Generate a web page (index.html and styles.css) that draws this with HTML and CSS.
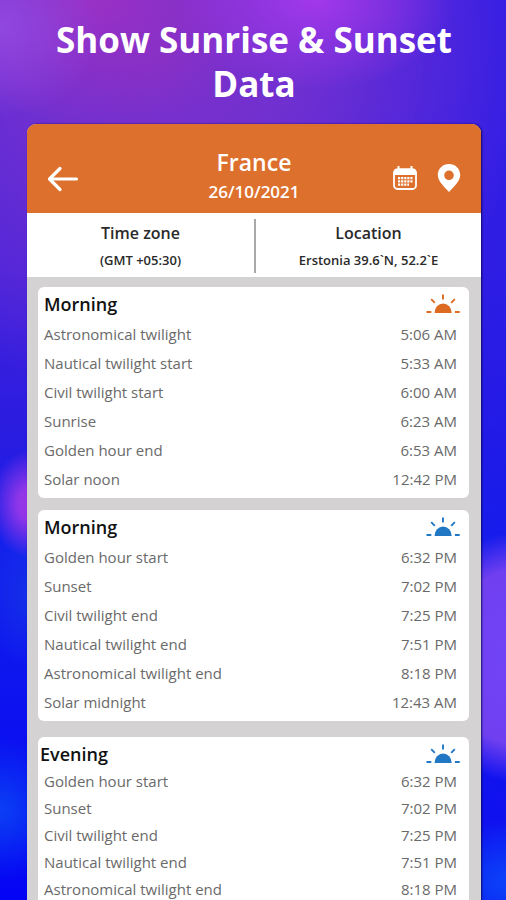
FILE: index.html
```html
<!DOCTYPE html>
<html lang="en">
<head>
<meta charset="utf-8">
<meta name="viewport" content="width=device-width, initial-scale=1">
<title>Sunrise &amp; Sunset</title>
<link rel="stylesheet" href="styles.css">
</head>
<body>
<svg class="defs" aria-hidden="true">
  <symbol id="sun" viewBox="0 0 34 20">
    <path d="M8.500 19a8.600 9.500 0 0 1 17.200 0z" fill="currentColor"/>
    <path d="M0.500 18h4.800M28.900 18h4.800M17 0.500v5M5.200 5.200l3.600 3.600M28.800 5.200l-3.600 3.600" stroke="currentColor" stroke-width="1.900" fill="none"/>
  </symbol>
</svg>
<main class="promo">
  <h1 class="headline">Show Sunrise &amp; Sunset Data</h1>
  <div class="phone">
    <header class="bar">
      <button class="icon-button" type="button" aria-label="Back">
        <svg width="32" height="26" viewBox="0 0 32 26"><path d="M13 2.500L2.500 13L13 23.500M3 13h26.500" fill="none" stroke="currentColor" stroke-width="3.200" stroke-linecap="round" stroke-linejoin="round"/></svg>
      </button>
      <div class="place">
        <h2>France</h2>
        <p>26/10/2021</p>
      </div>
      <div class="actions">
        <button class="icon-button" type="button" aria-label="Pick date">
          <svg width="24" height="24" viewBox="0 0 24 24"><rect x="1" y="3.500" width="22" height="19.500" rx="3.500" fill="none" stroke="currentColor" stroke-width="1.800"/><path d="M0.500 9V6.500Q0.500 2.500 4.500 2.500h15Q23.500 2.500 23.500 6.500V9zM4.500 0h2v4h-2zM17.500 0h2v4h-2z" fill="currentColor"/><path d="M5 12.200h14.500M5 15.400h14.500M5 18.600h11" stroke="currentColor" stroke-width="2.200" stroke-dasharray="2.200 0.900" fill="none"/></svg>
        </button>
        <button class="icon-button" type="button" aria-label="Pick location">
          <svg width="24" height="28" viewBox="0 0 24 28"><path fill="currentColor" fill-rule="evenodd" d="M12 0C5.600 0 0.800 4.800 0.800 11c0 6 5.700 11 11.200 17 5.500-6 11.200-11 11.200-17C23.200 4.800 18.400 0 12 0zm0 6.500a4.800 4.800 0 1 1 0 9.600 4.800 4.800 0 0 1 0-9.600z"/></svg>
        </button>
      </div>
    </header>
    <section class="info">
      <div class="info-item"><h3>Time zone</h3><p>(GMT +05:30)</p></div>
      <div class="info-item"><h3>Location</h3><p>Erstonia 39.6`N, 52.2`E</p></div>
    </section>
    <div class="cards">
      <section class="card">
        <div class="card-head"><h3>Morning</h3><svg class="sun sun-orange" aria-hidden="true"><use href="#sun"/></svg></div>
        <table>
          <tr><th scope="row">Astronomical twilight</th><td>5:06 AM</td></tr>
          <tr><th scope="row">Nautical twilight start</th><td>5:33 AM</td></tr>
          <tr><th scope="row">Civil twilight start</th><td>6:00 AM</td></tr>
          <tr><th scope="row">Sunrise</th><td>6:23 AM</td></tr>
          <tr><th scope="row">Golden hour end</th><td>6:53 AM</td></tr>
          <tr><th scope="row">Solar noon</th><td>12:42 PM</td></tr>
        </table>
      </section>
      <section class="card">
        <div class="card-head"><h3>Morning</h3><svg class="sun sun-blue" aria-hidden="true"><use href="#sun"/></svg></div>
        <table>
          <tr><th scope="row">Golden hour start</th><td>6:32 PM</td></tr>
          <tr><th scope="row">Sunset</th><td>7:02 PM</td></tr>
          <tr><th scope="row">Civil twilight end</th><td>7:25 PM</td></tr>
          <tr><th scope="row">Nautical twilight end</th><td>7:51 PM</td></tr>
          <tr><th scope="row">Astronomical twilight end</th><td>8:18 PM</td></tr>
          <tr><th scope="row">Solar midnight</th><td>12:43 AM</td></tr>
        </table>
      </section>
      <section class="card card-compact">
        <div class="card-head"><h3>Evening</h3><svg class="sun sun-blue" aria-hidden="true"><use href="#sun"/></svg></div>
        <table>
          <tr><th scope="row">Golden hour start</th><td>6:32 PM</td></tr>
          <tr><th scope="row">Sunset</th><td>7:02 PM</td></tr>
          <tr><th scope="row">Civil twilight end</th><td>7:25 PM</td></tr>
          <tr><th scope="row">Nautical twilight end</th><td>7:51 PM</td></tr>
          <tr><th scope="row">Astronomical twilight end</th><td>8:18 PM</td></tr>
        </table>
      </section>
    </div>
  </div>
</main>
</body>
</html>
```

FILE: styles.css
```css
* { box-sizing: border-box; margin: 0; padding: 0; }

body {
  font-family: "Open Sans", "Noto Sans", sans-serif;
  color: #111;
}

.defs { display: block; width: 0; height: 0; }

.promo {
  height: 100vh;
  overflow: hidden;
  padding: 18px 25px 0 27px;
  background:
    radial-gradient(ellipse 8% 6% at 6% 56%, #9a36e8 0%, #9036e8 30%, transparent 100%),
    radial-gradient(ellipse 24% 14% at 104% 73%, #7044f6 0%, #7040f0 70%, transparent 100%),
    radial-gradient(ellipse 20% 7% at 102% 98%, #0b48fa 0%, transparent 100%),
    radial-gradient(ellipse 14% 8% at 0% 90%, #0b40f4 0%, transparent 100%),
    radial-gradient(ellipse 10% 8% at 6% 66%, #1430e8 0%, transparent 100%),
    radial-gradient(ellipse 28% 10% at 62% 0%, #a238ea 0%, transparent 100%),
    radial-gradient(ellipse 20% 10% at 0% 3%, #9048e0 0%, transparent 100%),
    radial-gradient(ellipse 34% 14% at 18% 0%, #9a30c4 0%, transparent 100%),
    radial-gradient(ellipse 75% 38% at 32% 6%, #7e30c8 0%, #7030d0 35%, transparent 100%),
    linear-gradient(90deg, transparent 40%, rgba(24, 24, 236, 0.5) 100%),
    linear-gradient(180deg, #4a22e0 0%, #4422dc 30%, #2a1ce0 48%, #1420ec 60%, #0404f4 100%);
}

.headline {
  color: #fff;
  font-size: 35px;
  line-height: 44px;
  font-weight: 700;
  text-align: center;
}

.phone {
  margin-top: 18px;
  min-height: 100%;
  border-radius: 9px 9px 0 0;
  overflow: hidden;
  background: #d5d2d3;
  box-shadow: 1px 0 2px rgba(10, 0, 80, 0.8);
}

.bar {
  display: grid;
  grid-template-columns: 1fr auto 1fr;
  align-items: end;
  padding: 22px 20px 8px;
  background: #dd702d;
  color: #fff;
}

.place { text-align: center; }
.place h2 { font-size: 23px; line-height: 33px; font-weight: 600; }
.place p { font-size: 17px; line-height: 26px; font-weight: 600; }

.icon-button {
  display: block;
  border: 0;
  background: none;
  color: inherit;
  cursor: pointer;
}
.icon-button svg { display: block; }
.bar > .icon-button,
.actions { margin-bottom: 13px; }

.actions { display: flex; justify-content: flex-end; align-items: center; gap: 20px; }

.info {
  display: grid;
  grid-template-columns: 1fr 1fr;
  padding: 6px 0 4px;
  background: #fff;
  text-align: center;
}
.info-item + .info-item { border-left: 2px solid #a9a9a9; }
.info-item h3 { font-size: 16px; line-height: 28px; font-weight: 600; }
.info-item p { font-size: 13px; line-height: 26px; font-weight: 600; }
.info-item h3, .info-item p { color: #2a2a2a; }

.cards {
  display: flex;
  flex-direction: column;
  gap: 12px;
  padding: 10px 12px 0 11px;
}

.card {
  padding: 0 12px 5px 6px;
  border-radius: 6px;
  background: #fff;
}

.card-head {
  display: flex;
  justify-content: space-between;
  align-items: center;
  height: 32px;
  padding-top: 2px;
}
.card-head h3 { font-size: 18px; line-height: 28px; font-weight: 600; }

.sun { width: 34px; height: 20px; margin-right: -3px; }
.sun-orange { color: #dc6a20; }
.sun-blue { color: #2078c4; }

table { width: 100%; border-collapse: collapse; }
tr { height: 29px; }
th { text-align: left; }
td { text-align: right; }
th, td { color: #6a6a6a; font-size: 15px; line-height: 20px; font-weight: 400; }

.card-compact { margin-top: 4px; }
.card-compact .card-head { height: 30px; padding-top: 3px; }
.card-compact h3 { margin-left: -4px; }
.card-compact tr { height: 27px; }
```
